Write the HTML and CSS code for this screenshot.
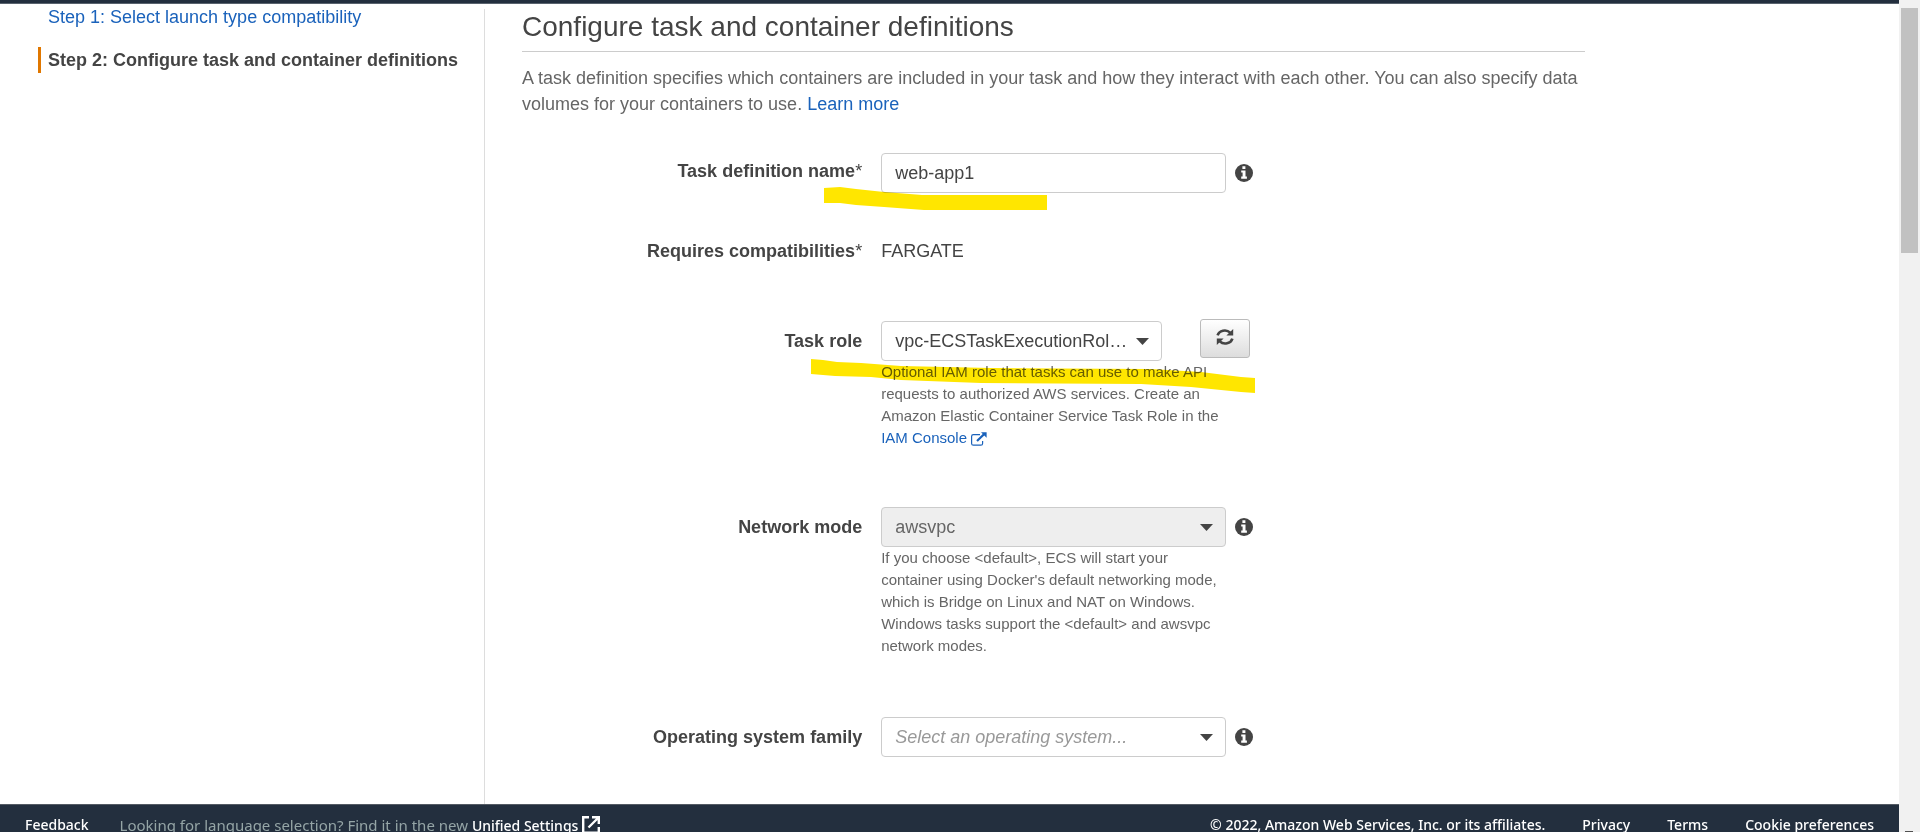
FILE: index.html
```html
<!DOCTYPE html>
<html lang="en">
<head>
<meta charset="utf-8">
<title>Configure task and container definitions</title>
<link rel="stylesheet" href="styles.css">
</head>
<body>
<svg class="defs" width="0" height="0" aria-hidden="true">
  <symbol id="info" viewBox="0 0 18 18">
    <circle cx="9" cy="9" r="9" fill="#444"/>
    <path fill="#fff" d="M7.4 2.3h3v2.6h-3zM6.2 6.4h4.3v6h1.4v2.3H6.2v-2.3h1.4V8.5H6.2z"/>
  </symbol>
  <symbol id="external" viewBox="0 0 16 14">
    <path fill="none" stroke="currentColor" stroke-width="1.2" d="M9 2.6H2.4Q.6 2.6.6 4.4v7Q.6 13.2 2.4 13.2h7.4q1.8 0 1.8-1.8V9"/>
    <path fill="none" stroke="currentColor" stroke-width="2.2" d="M6 9L13 2.2"/>
    <path fill="currentColor" d="M10 .2H15.6V5.8z"/>
  </symbol>
</svg>
<div class="window">
  <div class="page">
    <div class="topbar"></div>
    <div class="columns">
      <nav class="steps">
        <a class="step" href="#">Step 1: Select launch type compatibility</a>
        <div class="current">Step 2: Configure task and container definitions</div>
      </nav>
      <main class="content">
        <h1>Configure task and container definitions</h1>
        <p class="intro">A task definition specifies which containers are included in your task and how they interact with each other. You can also specify data volumes for your containers to use. <a href="#">Learn more</a></p>
        <form class="form">
          <div class="row name-row">
            <label for="name">Task definition name<span class="star">*</span></label>
            <div class="field">
              <input id="name" class="control" type="text" value="web-app1">
              <svg class="info"><use href="#info"/></svg>
            </div>
            <svg class="mark mark-name" viewBox="0 0 223 24" aria-hidden="true"><path d="M0 1L16 0L32 2L60 5L98 8L223 8V23H100L60 20L32 18L16 16H0Z"/></svg>
          </div>
          <div class="row requires-row">
            <div class="label">Requires compatibilities<span class="star">*</span></div>
            <div class="field">FARGATE</div>
          </div>
          <div class="row role-row">
            <label for="role">Task role</label>
            <div class="field">
              <select id="role" class="control short"><option>vpc-ECSTaskExecutionRol…</option></select>
              <button class="refresh" type="button" aria-label="Refresh">
                <svg viewBox="0 0 18 18"><g fill="none" stroke="#444" stroke-width="2.6"><path d="M1.6 7.4A7.4 6.6 0 0 1 14.2 4.6"/><path d="M16.4 10.6A7.4 6.6 0 0 1 3.8 13.4"/></g><path fill="#444" d="M17.2 1v6.5h-6.8zM.8 17v-6.5h6.8z"/></svg>
              </button>
            </div>
            <p class="help">Optional IAM role that tasks can use to make API requests to authorized AWS services. Create an Amazon Elastic Container Service Task Role in the <a href="#">IAM Console <svg class="external"><use href="#external"/></svg></a></p>
            <svg class="mark mark-role" viewBox="0 0 444 36" aria-hidden="true"><path d="M0 0L12 1L26 3L50 4L90 7L180 9L340 10L390 13L430 18L444 19V34L430 33L380 28L330 25L170 24L90 21L60 18L24 17L0 15Z"/></svg>
          </div>
          <div class="row network-row">
            <label for="network">Network mode</label>
            <div class="field">
              <select id="network" class="control" disabled><option>awsvpc</option></select>
              <svg class="info"><use href="#info"/></svg>
            </div>
            <p class="help">If you choose &lt;default&gt;, ECS will start your container using Docker's default networking mode, which is Bridge on Linux and NAT on Windows. Windows tasks support the &lt;default&gt; and awsvpc network modes.</p>
          </div>
          <div class="row">
            <label for="os">Operating system family</label>
            <div class="field">
              <select id="os" class="control placeholder"><option>Select an operating system...</option></select>
              <svg class="info"><use href="#info"/></svg>
            </div>
          </div>
        </form>
      </main>
    </div>
    <footer class="footer">
      <a href="#">Feedback</a>
      <span class="language">Looking for language selection? Find it in the new <a href="#">Unified Settings</a></span>
      <svg class="open" viewBox="0 0 18 18"><path fill="none" stroke="#fff" stroke-width="2.4" d="M7 1.2H1.2v15.6h15.6V11M10 1.2h6.8V8M16 2L6.5 11.5"/></svg>
      <span class="copyright">© 2022, Amazon Web Services, Inc. or its affiliates.</span>
      <a class="legal" href="#">Privacy</a>
      <a class="legal" href="#">Terms</a>
      <a class="legal" href="#">Cookie preferences</a>
    </footer>
  </div>
  <div class="scrollbar" aria-hidden="true"><div class="thumb"></div><div class="arrow"></div></div>
</div>
</body>
</html>
```
FILE: styles.css
```css
* { box-sizing: border-box; }

body {
  margin: 0;
  overflow: hidden;
  background: #fff;
  color: #444;
  font-family: "Liberation Sans", Arial, sans-serif;
  font-size: 18px;
  line-height: 26px;
}

a { color: #1a62bb; text-decoration: none; }
h1, p { margin: 0; }
.defs { position: absolute; }

.window { display: flex; height: 100vh; }
.page { flex: 1; display: flex; flex-direction: column; min-width: 0; }
.topbar { flex: none; height: 4px; background: #232f3e; border-bottom: 1px solid #59636e; }
.columns { flex: 1; display: flex; min-height: 0; padding-top: 5px; }

.steps {
  flex: none;
  width: 485px;
  padding-left: 38px;
  border-right: 1px solid #ddd;
  display: flex;
  flex-direction: column;
  gap: 22px;
}
.step { padding-left: 10px; line-height: 16px; white-space: nowrap; }
.current {
  padding-left: 7px;
  border-left: 3px solid #e07700;
  font-weight: bold;
  white-space: nowrap;
}

.content { flex: 1; padding: 0 314px 0 37px; }
h1 {
  padding-bottom: 7px;
  border-bottom: 1px solid #ccc;
  font-size: 28px;
  line-height: 35px;
  font-weight: normal;
}
.intro { padding: 13px 0 36px; color: #666; }

.row {
  position: relative;
  display: grid;
  grid-template-columns: 32% 345px;
  column-gap: 19px;
}
.row label, .label { text-align: right; font-weight: bold; }
.row label { line-height: 40px; }
.name-row label { line-height: 36px; }
.star { font-weight: normal; }
.field { display: flex; align-items: center; width: max-content; }
.name-row { margin-bottom: 45px; }
.requires-row { margin-bottom: 57px; }
.role-row { margin-bottom: 58px; }
.network-row { margin-bottom: 60px; }

.control {
  width: 345px;
  height: 40px;
  padding: 0 13px;
  border: 1px solid #ccc;
  border-radius: 4px;
  background-color: #fff;
  color: #444;
  font: inherit;
}
select.control {
  appearance: none;
  background-image: url("data:image/svg+xml,%3Csvg xmlns='http://www.w3.org/2000/svg' viewBox='0 0 13 7'%3E%3Cpath fill='%23444' d='M0 0h13L6.5 7z'/%3E%3C/svg%3E");
  background-repeat: no-repeat;
  background-position: right 12px center;
  background-size: 13px 7px;
  opacity: 1;
}
select.control:disabled { background-color: #eee; color: #666; }
select.placeholder { color: #999; font-style: italic; }
.control.short { width: 281px; }

.info { width: 18px; height: 18px; margin-left: 9px; }
.refresh {
  align-self: flex-start;
  width: 50px;
  height: 39px;
  margin: -2px 0 0 38px;
  padding: 0 0 3px;
  border: 1px solid #bbb;
  border-radius: 3px;
  background: linear-gradient(#fff, #ddd);
}
.refresh svg { display: block; width: 18px; height: 18px; margin: 0 auto; }
.help { grid-column: 2; color: #666; font-size: 15px; line-height: 22px; }
.external { width: 16px; height: 14px; vertical-align: -3px; }

.mark { position: absolute; fill: #ffe600; mix-blend-mode: multiply; }
.mark-name { left: 302px; top: 34px; width: 223px; height: 24px; }
.mark-role { left: 289px; top: 38px; width: 444px; height: 36px; }

.footer {
  flex: none;
  display: flex;
  height: 28px;
  padding: 7px 25px 0;
  border-top: 1px solid #545b64;
  background: #232f3e;
  overflow: hidden;
  color: #fff;
  font-family: "Noto Sans", sans-serif;
  font-size: 14px;
  font-weight: 500;
  line-height: 26px;
  white-space: nowrap;
}
.footer a { color: #fff; }
.language { margin-left: 31px; color: #95a5a6; font-size: 15px; font-weight: 400; }
.language a { font-size: 14px; font-weight: 500; }
.open { width: 18px; height: 18px; margin: 4px 0 0 4px; }
.copyright { margin-left: auto; }
.legal { margin-left: 37px; }

.scrollbar { position: relative; flex: none; width: 21px; padding: 8px 2px; background: #f1f1f1; }
.thumb { height: 245px; background: #c1c1c1; }
.arrow { position: absolute; bottom: 0; left: 6px; width: 8px; height: 1px; background: #505050; }
```
